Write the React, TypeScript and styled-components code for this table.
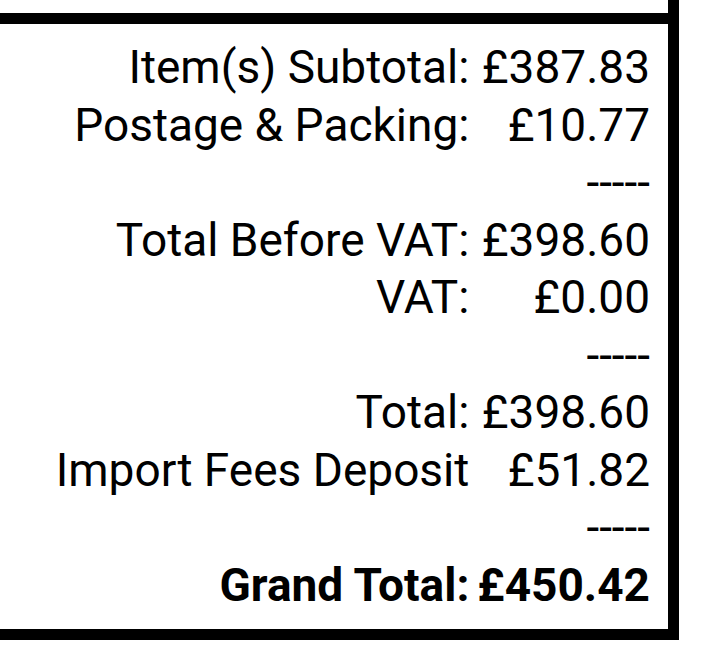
import React from "react";
import styled, { createGlobalStyle } from "styled-components";

const Global = createGlobalStyle`
  html, body {
    margin: 0;
    padding: 0;
    background: #ffffff;
  }
  body {
    font-family: Roboto, "Liberation Sans", Arial, sans-serif;
    color: #000000;
    overflow: hidden;
  }
`;

const Page = styled.div`
  display: flex;
  flex-direction: column;
  width: 679px;
`;

const UpperBox = styled.div`
  height: 13px;
  border-right: 11px solid #000;
  border-bottom: 11px solid #000;
`;

const SummaryBox = styled.div`
  border-right: 11px solid #000;
  border-bottom: 11px solid #000;
  padding: 15px 18px 15px 0;
`;

const Table = styled.div`
  display: grid;
  grid-template-columns: auto auto;
  justify-content: end;
  column-gap: 8px;
  font-size: 46px;
  line-height: 57.5px;
`;

const Label = styled.div<{ $bold?: boolean }>`
  text-align: right;
  white-space: nowrap;
  font-weight: ${(p) => (p.$bold ? 700 : 400)};
`;

const Value = styled.div<{ $bold?: boolean }>`
  text-align: right;
  white-space: nowrap;
  font-weight: ${(p) => (p.$bold ? 700 : 400)};
`;

type Row = { label: string; value: string; bold?: boolean };

const rows: Row[] = [
  { label: "Item(s) Subtotal:", value: "£387.83" },
  { label: "Postage & Packing:", value: "£10.77" },
  { label: "", value: "-----" },
  { label: "Total Before VAT:", value: "£398.60" },
  { label: "VAT:", value: "£0.00" },
  { label: "", value: "-----" },
  { label: "Total:", value: "£398.60" },
  { label: "Import Fees Deposit", value: "£51.82" },
  { label: "", value: "-----" },
  { label: "Grand Total:", value: "£450.42", bold: true },
];

export default function App() {
  return (
    <>
      <Global />
      <Page>
        <UpperBox />
        <SummaryBox>
          <Table>
            {rows.map((r, i) => (
              <React.Fragment key={i}>
                <Label $bold={r.bold}>{r.label}</Label>
                <Value $bold={r.bold}>{r.value}</Value>
              </React.Fragment>
            ))}
          </Table>
        </SummaryBox>
      </Page>
    </>
  );
}
